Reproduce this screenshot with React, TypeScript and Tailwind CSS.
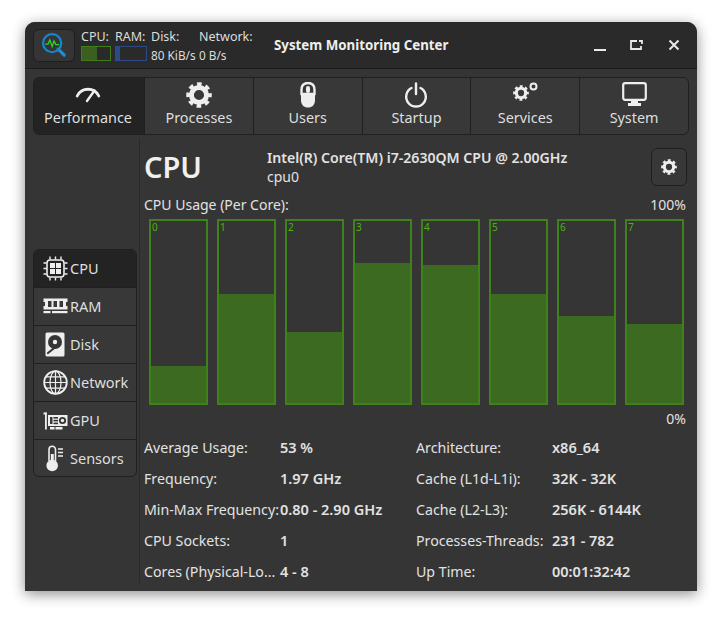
import type { ReactNode } from 'react';

const Gear = ({ size, color = '#eeeeee' }: { size: number; color?: string }) => (
  <svg width={size} height={size} viewBox="0 0 24 24" fill="none" stroke={color}>
    <circle cx="12" cy="12" r="7" strokeWidth="4.6" />
    <circle cx="12" cy="12" r="10" strokeWidth="3.6" strokeDasharray="4.2 3.654" strokeDashoffset="2.1" />
  </svg>
);

const Speedometer = () => (
  <svg width="26" height="26" viewBox="0 0 26 26" fill="none" stroke="#eeeeee" strokeLinecap="round">
    <path d="M2.2 14 A12 12 0 0 1 23.8 14" strokeWidth="2.8" />
    <path d="M12 19 L19.500 8.500" strokeWidth="2.400" />
  </svg>
);

const Mouse = () => (
  <svg width="16" height="26" viewBox="0 0 16 26">
    <path d="M8 1 C3.500 1 1.500 4 1.500 8 V12 H14.500 V8 C14.500 4 12.500 1 8 1 Z" fill="none" stroke="#eeeeee" strokeWidth="2.400" />
    <rect x="6" y="4" width="4" height="7" rx="2" fill="#eeeeee" />
    <path d="M1 13 H15 V18 C15 23 12 25.500 8 25.500 C4 25.500 1 23 1 18 Z" fill="#eeeeee" />
  </svg>
);

const Power = () => (
  <svg width="24" height="26" viewBox="0 0 24 26" fill="none" stroke="#eeeeee" strokeWidth="2.400" strokeLinecap="round">
    <path d="M12 1.500 V12" />
    <path d="M7.500 6 A9.800 9.800 0 1 0 16.500 6" />
  </svg>
);

const Services = () => (
  <div className="flex items-start h-[20px]">
    <Gear size={16} />
    <svg width="9" height="9" viewBox="0 0 9 9" fill="none" stroke="#eeeeee" className="-mt-[3px]">
      <circle cx="4.500" cy="4.500" r="3" strokeWidth="2" />
    </svg>
  </div>
);

const Monitor = () => (
  <svg width="25" height="25" viewBox="0 0 25 25">
    <rect x="1.200" y="1.200" width="22.600" height="16.600" rx="2" fill="none" stroke="#eeeeee" strokeWidth="2.200" />
    <path d="M9 19 H16 V21 H19 V24 H6 V21 H9 Z" fill="#eeeeee" />
  </svg>
);

const CpuIcon = () => (
  <svg width="25" height="25" viewBox="0 0 25 25" fill="#eeeeee" stroke="none">
    <rect x="4" y="4" width="17" height="17" rx="3" fill="none" stroke="#eeeeee" strokeWidth="1.600" />
    <rect x="7" y="7" width="5" height="5" />
    <rect x="13" y="7" width="5" height="5" />
    <rect x="7" y="13" width="5" height="5" />
    <rect x="13" y="13" width="5" height="5" />
    <path
      d="M7 0.500 V3.500 M12.500 0.500 V3.500 M18 0.500 V3.500 M7 21.500 V24.500 M12.500 21.500 V24.500 M18 21.500 V24.500 M0.500 7 H3.500 M0.500 12.500 H3.500 M0.500 18 H3.500 M21.500 7 H24.500 M21.500 12.500 H24.500 M21.500 18 H24.500"
      stroke="#eeeeee"
      strokeWidth="1.400"
    />
  </svg>
);

const RamIcon = () => (
  <svg width="25" height="18" viewBox="0 0 25 18" fill="#eeeeee">
    <path d="M0.500 0.500 H24.500 V4 H23 V8 H24.500 V11.500 H0.500 V8 H2 V4 H0.500 Z M5 3 V9 H8.500 V3 Z M10.500 3 V9 H14 V3 Z M16.500 3 V9 H20 V3 Z" fillRule="evenodd" />
    <rect x="0.500" y="13" width="7" height="2.200" />
    <rect x="9" y="13" width="15.500" height="2.200" />
  </svg>
);

const DiskIcon = () => (
  <svg width="20" height="25" viewBox="0 0 20 25">
    <rect x="0.500" y="0.500" width="19" height="24" rx="1.500" fill="#eeeeee" />
    <circle cx="10" cy="10" r="7" fill="#353535" />
    <circle cx="10" cy="10" r="2.200" fill="#eeeeee" />
    <path d="M3 21 L10.500 15" stroke="#353535" strokeWidth="2.200" strokeLinecap="round" />
  </svg>
);

const GlobeIcon = () => (
  <svg width="25" height="25" viewBox="0 0 25 25" fill="none" stroke="#eeeeee" strokeWidth="1.200">
    <circle cx="12.500" cy="12.500" r="11.300" strokeWidth="1.800" />
    <ellipse cx="12.500" cy="12.500" rx="5.500" ry="11.300" />
    <path d="M12.500 1.200 V23.800 M1.200 12.500 H23.800 M3 6.800 H22 M3 18.200 H22" />
  </svg>
);

const GpuIcon = () => (
  <svg width="25" height="18" viewBox="0 0 25 18" fill="#eeeeee">
    <rect x="0.500" y="0.500" width="3" height="2" />
    <rect x="2" y="0.500" width="1.800" height="17" />
    <path d="M5 3 H24.500 V14 H5 Z M7 5 V12 H9.500 V5 Z" fillRule="evenodd" />
    <rect x="10.500" y="5" width="4.500" height="1.600" fill="#353535" />
    <rect x="10.500" y="7.800" width="4.500" height="1.600" fill="#353535" />
    <rect x="10.500" y="10.600" width="4.500" height="1.600" fill="#353535" />
    <circle cx="19.500" cy="8.500" r="3.600" fill="#353535" />
    <circle cx="19.500" cy="8.500" r="1.700" />
    <rect x="7" y="15" width="4.500" height="2.500" />
    <rect x="12.500" y="15" width="7" height="2.500" />
  </svg>
);

const ThermoIcon = () => (
  <svg width="18" height="27" viewBox="0 0 18 27">
    <path d="M3 16 V4.500 A3.200 3.200 0 0 1 9.500 4.500 V16" fill="none" stroke="#eeeeee" strokeWidth="1.600" />
    <rect x="4.800" y="9" width="3" height="9" fill="#eeeeee" />
    <circle cx="6.200" cy="20.500" r="5.800" fill="#eeeeee" />
    <path d="M12 4 H17 M12 7.500 H17 M12 11 H17" stroke="#eeeeee" strokeWidth="1.600" />
  </svg>
);

const AppLogo = () => (
  <svg width="26" height="26" viewBox="0 0 28 28" fill="none">
    <path d="M18.500 18.500 L25 25" stroke="#1c8fd8" strokeWidth="3.400" strokeLinecap="round" />
    <circle cx="12" cy="12" r="9.800" stroke="#1587d0" strokeWidth="2.400" />
    <path d="M4.500 13 H7.500 L9.500 8.500 L12 15.500 L14 9.500 L16 13.500 H19.500" stroke="#2fd32f" strokeWidth="1.400" />
  </svg>
);

const tabs: { label: string; icon: ReactNode }[] = [
  { label: 'Performance', icon: <Speedometer /> },
  { label: 'Processes', icon: <Gear size={26} /> },
  { label: 'Users', icon: <Mouse /> },
  { label: 'Startup', icon: <Power /> },
  { label: 'Services', icon: <Services /> },
  { label: 'System', icon: <Monitor /> },
];

const sideItems: { label: string; icon: ReactNode }[] = [
  { label: 'CPU', icon: <CpuIcon /> },
  { label: 'RAM', icon: <RamIcon /> },
  { label: 'Disk', icon: <DiskIcon /> },
  { label: 'Network', icon: <GlobeIcon /> },
  { label: 'GPU', icon: <GpuIcon /> },
  { label: 'Sensors', icon: <ThermoIcon /> },
];

const cores = [37, 109, 71, 140, 138, 109, 87, 79];

const leftRows = [
  ['Average Usage:', '53 %'],
  ['Frequency:', '1.97 GHz'],
  ['Min-Max Frequency:', '0.80 - 2.90 GHz'],
  ['CPU Sockets:', '1'],
  ['Cores (Physical-Lo...', '4 - 8'],
];

const rightRows = [
  ['Architecture:', 'x86_64'],
  ['Cache (L1d-L1i):', '32K - 32K'],
  ['Cache (L2-L3):', '256K - 6144K'],
  ['Processes-Threads:', '231 - 782'],
  ['Up Time:', '00:01:32:42'],
];

const DetailColumn = ({ rows, width }: { rows: string[][]; width: string }) => (
  <div className={width}>
    {rows.map(([label, value]) => (
      <div key={label} className="flex h-[31px] items-center">
        <span className="w-[136px] whitespace-nowrap text-[14.2px]">{label}</span>
        <span className="font-semibold whitespace-nowrap text-[14.5px]">{value}</span>
      </div>
    ))}
  </div>
);

export default function App() {
  return (
    <div
      className="w-[722px] h-[619px] bg-white pt-[22px] pl-[25px] overflow-hidden text-[14px] text-[#e2e2e2]"
      style={{ fontFamily: '"Noto Sans", sans-serif' }}
    >
      <div className="w-[672px] h-[569px] rounded-t-[10px] bg-[#353535] overflow-hidden flex flex-col shadow-[0_3px_14px_rgba(0,0,0,0.45)]">
        <header className="h-[47px] shrink-0 bg-[#2a2a2a] border-b border-[#1b1b1b] flex items-center pl-2 pr-[16px]">
          <div className="w-[42px] h-[33px] rounded-[6px] bg-[#353535] border border-[#1f1f1f] flex items-center justify-center">
            <AppLogo />
          </div>
          <div className="ml-[6px] pt-[1px] w-[172px] text-[12.5px] leading-[15px] text-[#dddddd] grid grid-cols-[34px_36px_48px_54px]">
            <span>CPU:</span>
            <span>RAM:</span>
            <span>Disk:</span>
            <span>Network:</span>
            <div className="mt-[2px] w-[30px] h-[15px] border border-[#3f7d16] flex">
              <div className="w-[15px] bg-[#3a5f20]" />
            </div>
            <div className="mt-[2px] w-[32px] h-[15px] border border-[#2e4a86] flex">
              <div className="w-[4px] bg-[#2b4a86]" />
            </div>
            <span className="mt-[4px] text-[11.8px] whitespace-nowrap">80 KiB/s</span>
            <span className="mt-[4px] text-[11.8px] whitespace-nowrap">0 B/s</span>
          </div>
          <div className="ml-[21px] pt-[1px] font-bold text-[13.3px] text-[#eeeeee] whitespace-nowrap">System Monitoring Center</div>
          <div className="ml-auto flex items-center gap-[24px]">
            <svg width="14" height="14" viewBox="0 0 14 14" stroke="#e8e8e8" strokeWidth="2" fill="none" className="-mr-[2px]">
              <path d="M1 12 H13" />
            </svg>
            <svg width="14" height="14" viewBox="0 0 14 14" stroke="#e8e8e8" strokeWidth="1.800" fill="none">
              <path d="M8 3 H2 V11 H12 V8 M10 3 H13 V6" />
            </svg>
            <svg width="14" height="14" viewBox="0 0 14 14" stroke="#e8e8e8" strokeWidth="2" fill="none">
              <path d="M2.500 2.500 L11.500 11.500 M11.500 2.500 L2.500 11.500" />
            </svg>
          </div>
        </header>

        <nav className="mx-2 mt-2 h-[58px] shrink-0 flex rounded-[6px] border border-[#202020] overflow-hidden bg-[#383838]">
          {tabs.map((tab, i) => (
            <div
              key={tab.label}
              className={
                i === 0
                  ? 'w-[110px] pr-[2px] bg-[#232323] flex flex-col items-center'
                  : 'flex-1 border-l border-[#202020] flex flex-col items-center'
              }
            >
              <div className="h-[30px] pt-[3px] flex items-center justify-center">{tab.icon}</div>
              <span className="text-[14.4px] leading-[20px] text-[#dfdfdf]">{tab.label}</span>
            </div>
          ))}
        </nav>

        <div className="flex-1 flex min-h-0">
          <aside className="w-[114px] shrink-0 pl-2 flex items-center">
            <div className="w-[104px] rounded-[6px] border border-[#202020] overflow-hidden bg-[#383838]">
              {sideItems.map((item, i) => (
                <div
                  key={item.label}
                  className={
                    i === 0
                      ? 'h-[37px] flex items-center bg-[#232323]'
                      : i === 5
                        ? 'h-[37px] pt-[1px] flex items-center border-t border-[#202020]'
                        : 'h-[38px] flex items-center border-t border-[#202020]'
                  }
                >
                  <span className="w-[36px] pl-[6px] flex justify-center">{item.icon}</span>
                  <span className="text-[14.5px] text-[#dfdfdf]">{item.label}</span>
                </div>
              ))}
            </div>
          </aside>

          <main className="flex-1 border-l border-[#2a2a2a] mt-[3px] mb-[8px] pl-[4px] pr-[11px] pt-[5px] min-w-0">
            <div className="flex h-[47px] pt-[5px]">
              <div className="w-[123px] text-[29px] leading-[38px] font-semibold text-[#f0f0f0]">CPU</div>
              <div className="leading-[20px]">
                <div className="font-semibold text-[14.1px]">Intel(R) Core(TM) i7-2630QM CPU @ 2.00GHz</div>
                <div className="-mt-[1px]">cpu0</div>
              </div>
              <div className="ml-auto -mr-[1px] w-[36px] h-[38px] rounded-[6px] bg-[#383838] border border-[#1f1f1f] flex items-center justify-center">
                <Gear size={16} />
              </div>
            </div>
            <div className="flex justify-between leading-[20px] mt-[5px]">
              <span>CPU Usage (Per Core):</span>
              <span>100%</span>
            </div>
            <div className="flex gap-[9px] pl-[5px] mt-[4px] h-[186px]">
              {cores.map((fill, i) => (
                <div key={i} className="relative w-[59px] border-2 border-[#3f8219] flex flex-col justify-end">
                  <span className="absolute left-[1px] top-0 text-[10px] leading-[13px] text-[#4db30c]">{i}</span>
                  <div className="bg-[#3c6a20]" style={{ height: `${fill}px` }} />
                </div>
              ))}
            </div>
            <div className="text-right leading-[20px] mt-[4px]">0%</div>
            <div className="flex mt-[3px]">
              <DetailColumn rows={leftRows} width="w-[272px]" />
              <DetailColumn rows={rightRows} width="w-[270px]" />
            </div>
          </main>
        </div>
      </div>
    </div>
  );
}
